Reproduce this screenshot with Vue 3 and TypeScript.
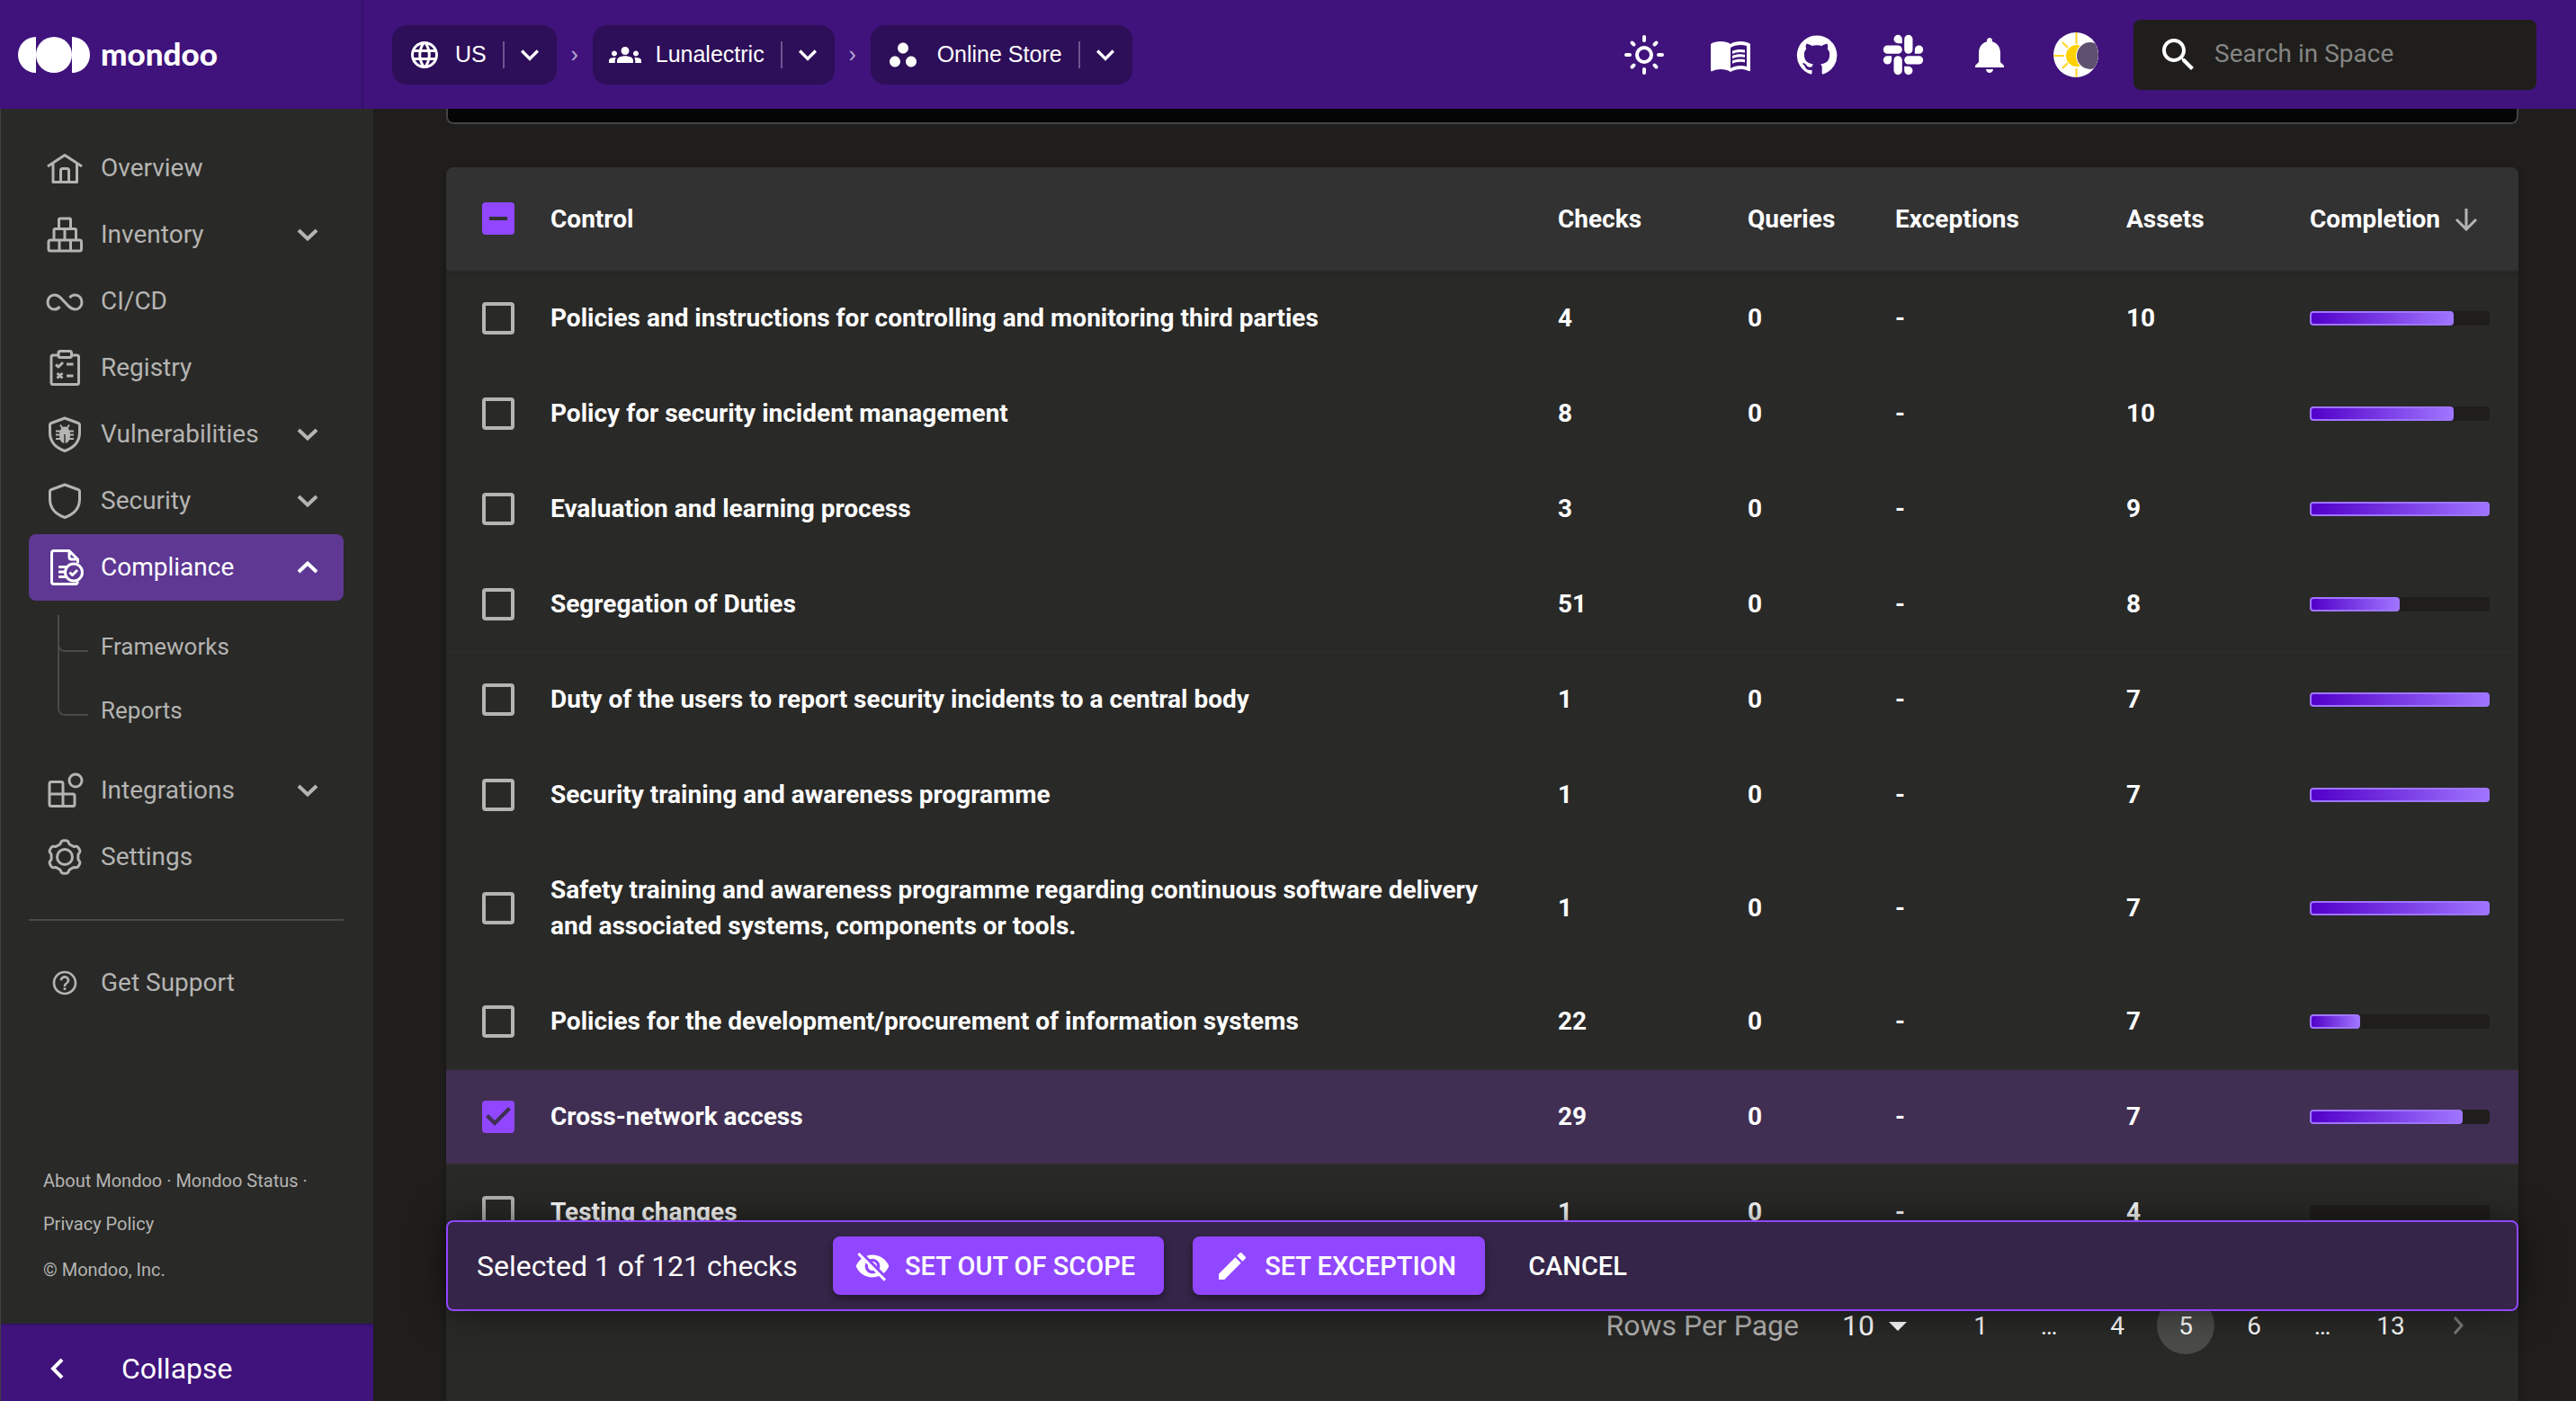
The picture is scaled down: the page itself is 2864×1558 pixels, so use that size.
<script setup lang="ts">
import { ref } from 'vue'

interface NavItem {
  label: string
  icon: string
  expandable?: boolean
  open?: boolean
  children?: string[]
}

interface Control {
  name: string
  checks: number
  queries: number
  exceptions: string
  assets: number
  completion: number
  selected?: boolean
}

interface Crumb {
  label: string
  icon: string
}

const crumbs: Crumb[] = [
  {
    label: 'US',
    icon: 'M11.99 2C6.47 2 2 6.48 2 12s4.47 10 9.99 10C17.52 22 22 17.52 22 12S17.52 2 11.99 2zm6.93 6h-2.95c-.32-1.25-.78-2.45-1.38-3.56 1.84.63 3.37 1.91 4.33 3.56zM12 4.04c.83 1.2 1.48 2.53 1.91 3.96h-3.82c.43-1.43 1.08-2.76 1.91-3.96zM4.26 14C4.1 13.36 4 12.69 4 12s.1-1.36.26-2h3.38c-.08.66-.14 1.32-.14 2s.06 1.34.14 2H4.26zm.82 2h2.95c.32 1.25.78 2.45 1.38 3.56-1.84-.63-3.37-1.9-4.33-3.56zm2.95-8H5.08c.96-1.66 2.49-2.93 4.33-3.56C8.81 5.55 8.35 6.75 8.03 8zM12 19.96c-.83-1.2-1.48-2.53-1.91-3.96h3.82c-.43 1.43-1.08 2.76-1.91 3.96zM14.34 14H9.66c-.09-.66-.16-1.32-.16-2s.07-1.35.16-2h4.68c.09.65.16 1.32.16 2s-.07 1.34-.16 2zm.25 5.56c.6-1.11 1.06-2.31 1.38-3.56h2.95c-.96 1.65-2.49 2.93-4.33 3.56zM16.36 14c.08-.66.14-1.32.14-2s-.06-1.34-.14-2h3.38c.16.64.26 1.31.26 2s-.1 1.36-.26 2h-3.38z',
  },
  {
    label: 'Lunalectric',
    icon: 'M12 12.75c1.63 0 3.07.39 4.24.9 1.08.48 1.76 1.56 1.76 2.73V18H6v-1.61c0-1.18.68-2.26 1.76-2.73 1.17-.52 2.61-.91 4.24-.91zM4 13c1.1 0 2-.9 2-2s-.9-2-2-2-2 .9-2 2 .9 2 2 2zm1.13 1.1c-.37-.06-.74-.1-1.13-.1-.99 0-1.93.21-2.78.58C.48 14.9 0 15.62 0 16.43V18h4.5v-1.61c0-.83.23-1.61.63-2.29zM20 13c1.1 0 2-.9 2-2s-.9-2-2-2-2 .9-2 2 .9 2 2 2zm4 3.43c0-.81-.48-1.53-1.22-1.85-.85-.37-1.79-.58-2.78-.58-.39 0-.76.04-1.13.1.4.68.63 1.46.63 2.29V18H24v-1.57zM12 6c1.66 0 3 1.34 3 3s-1.34 3-3 3-3-1.34-3-3 1.34-3 3-3z',
  },
  {
    label: 'Online Store',
    icon: 'M6 13c-2.2 0-4 1.8-4 4s1.8 4 4 4 4-1.8 4-4-1.8-4-4-4zm6-10C9.8 3 8 4.8 8 7s1.8 4 4 4 4-1.8 4-4-1.8-4-4-4zm6 10c-2.2 0-4 1.8-4 4s1.8 4 4 4 4-1.8 4-4-1.8-4-4-4z',
  },
]

// Six-lobed outline of the settings gear, in a 48-unit box.
function gearPath(): string {
  const points: string[] = []
  for (let i = 0; i < 120; i++) {
    const a = (i / 120) * Math.PI * 2
    const wave = Math.tanh(2.2 * -Math.cos(6 * a)) / Math.tanh(2.2)
    const r = 16.6 + 1.7 * wave
    points.push(`${(24 + r * Math.cos(a)).toFixed(2)} ${(24 + r * Math.sin(a)).toFixed(2)}`)
  }
  return `M${points.join('L')}Z`
}

const navItems: NavItem[] = [
  { label: 'Overview', icon: 'overview' },
  { label: 'Inventory', icon: 'inventory', expandable: true },
  { label: 'CI/CD', icon: 'cicd' },
  { label: 'Registry', icon: 'registry' },
  { label: 'Vulnerabilities', icon: 'vulnerabilities', expandable: true },
  { label: 'Security', icon: 'security', expandable: true },
  { label: 'Compliance', icon: 'compliance', expandable: true, open: true, children: ['Frameworks', 'Reports'] },
  { label: 'Integrations', icon: 'integrations', expandable: true },
  { label: 'Settings', icon: 'settings' },
]

const strokes: Record<string, string> = {
  overview: 'M5 22 24 9.500 43 22M11 18.500V39.500H37.500V18.500M19.500 39V26.500Q19.500 24.500 21.500 24.500H26.500Q28.500 24.500 28.500 26.500V39',
  inventory: 'M19 6H29.500Q30.500 6 30.500 7V17.500H17.500V7Q17.500 6 19 6ZM13.500 17.500H35Q36.500 17.500 36.500 19V30H12V19Q12 17.500 13.500 17.500ZM24 17.500V30M8 30H40.500Q42.500 30 42.500 32V40Q42.500 42 40.500 42H8Q6 42 6 40V32Q6 30 8 30ZM18 30V42M30.500 30V42',
  cicd: 'M18.500 30C17 32 15 33 12.500 33A7.500 8 0 0 1 12.500 17C17.500 17 20 20.500 24 25C28 29.500 30.500 33 35.500 33A7.500 8 0 0 0 35.500 17C33 17 31 18 29.500 20',
  registry: 'M17 10H11Q9 10 9 12V40.500Q9 42.500 11 42.500H37.500Q39.500 42.500 39.500 40.500V12Q39.500 10 37.500 10H32M19 5.500H29.500Q31.500 5.500 31.500 7.500V10.500Q31.500 12.500 29.500 12.500H19Q17 12.500 17 10.500V7.500Q17 5.500 19 5.500ZM14 20.500 17 23 22 18M26 20H33.500M15.500 30 21.500 35.500M21.500 30 15.500 35.500M26 33H33.500',
  vulnerabilities: 'M24 6 9 11.500Q7.500 12 7.500 13.500V22C7.500 32 14 39 24 42.500C34 39 40.500 32 40.500 22V13.500Q40.500 12 39 11.500Z',
  security: 'M24 6 9 11.500Q7.500 12 7.500 13.500V22C7.500 32 14 39 24 42.500C34 39 40.500 32 40.500 22V13.500Q40.500 12 39 11.500Z',
  compliance: 'M38.500 19V15L29 5.500H12Q9.500 5.500 9.500 8V40Q9.500 42.500 12 42.500H36Q38 42.500 38.500 39.500M29 5.500V12.500Q29 15 31.500 15H38.500M17 23.500H27M17 29H25M17 34.500H26M29.500 29.500 32.500 32.500 38 27M43.500 29.500A9.500 9.500 0 1 1 24.500 29.500A9.500 9.500 0 1 1 43.500 29.500Z',
  integrations: 'M9 14.500H20Q22 14.500 22 16.500V41.500H9Q7 41.500 7 39.500V16.500Q7 14.500 9 14.500ZM7 28H33Q35 28 35 30V39.500Q35 41.500 33 41.500H22M43 13A7 7 0 1 1 29 13A7 7 0 1 1 43 13Z',
  settings: gearPath() + 'M32.500 24A8.500 8.500 0 1 1 15.500 24A8.500 8.500 0 1 1 32.500 24Z',
}

const controls = ref<Control[]>([
  { name: 'Policies and instructions for controlling and monitoring third parties', checks: 4, queries: 0, exceptions: '-', assets: 10, completion: 80 },
  { name: 'Policy for security incident management', checks: 8, queries: 0, exceptions: '-', assets: 10, completion: 80 },
  { name: 'Evaluation and learning process', checks: 3, queries: 0, exceptions: '-', assets: 9, completion: 100 },
  { name: 'Segregation of Duties', checks: 51, queries: 0, exceptions: '-', assets: 8, completion: 50 },
  { name: 'Duty of the users to report security incidents to a central body', checks: 1, queries: 0, exceptions: '-', assets: 7, completion: 100 },
  { name: 'Security training and awareness programme', checks: 1, queries: 0, exceptions: '-', assets: 7, completion: 100 },
  { name: 'Safety training and awareness programme regarding continuous software delivery and associated systems, components or tools.', checks: 1, queries: 0, exceptions: '-', assets: 7, completion: 100 },
  { name: 'Policies for the development/procurement of information systems', checks: 22, queries: 0, exceptions: '-', assets: 7, completion: 28 },
  { name: 'Cross-network access', checks: 29, queries: 0, exceptions: '-', assets: 7, completion: 85, selected: true },
  { name: 'Testing changes', checks: 1, queries: 0, exceptions: '-', assets: 4, completion: 0 },
])

const pages: string[] = ['1', '…', '4', '5', '6', '…', '13']
const currentPage = ref('5')
const search = ref('')
const rowsPerPage = ref('10')
</script>

<template>
  <div class="app">
    <header class="topbar">
      <div class="brand">
        <a href="#" class="logo" aria-label="mondoo">
          <svg class="logo-mark" viewBox="0 0 80 40" aria-hidden="true">
            <path d="M20 0a20 20 0 0 0 0 40zM60 0a20 20 0 0 1 0 40z" />
            <circle cx="40" cy="20" r="20" />
          </svg>
          <span class="logo-text">mondoo</span>
        </a>
      </div>

      <nav class="crumbs" aria-label="Breadcrumb">
        <template v-for="(crumb, i) in crumbs" :key="crumb.label">
          <span v-if="i > 0" class="crumb-sep" aria-hidden="true">›</span>
          <div class="crumb" :class="{ current: i === crumbs.length - 1 }">
            <a href="#" class="crumb-link">
              <svg class="icon-36" viewBox="0 0 24 24" aria-hidden="true"><path :d="crumb.icon" /></svg>
              <span>{{ crumb.label }}</span>
            </a>
            <button type="button" class="crumb-toggle" :aria-label="`Switch ${crumb.label}`">
              <svg class="icon-40" viewBox="0 0 24 24" aria-hidden="true"><path d="M7.410 8.590 12 13.170l4.590-4.580L18 10l-6 6-6-6z" /></svg>
            </button>
          </div>
        </template>
      </nav>

      <div class="tools">
        <button type="button" aria-label="Theme">
          <svg class="icon-48" viewBox="0 0 48 48" aria-hidden="true">
            <circle cx="24" cy="24" r="8" fill="none" stroke="currentColor" stroke-width="4" />
            <path d="M24 4v4M24 40v4M4 24h4M40 24h4M10.500 10.500l2 2M35.500 35.500l2 2M37.500 10.500l-2 2M12.500 35.500l-2 2" fill="none" stroke="currentColor" stroke-width="4" stroke-linecap="round" />
          </svg>
        </button>
        <a href="#" aria-label="Documentation">
          <svg class="icon-48" viewBox="0 0 24 24" aria-hidden="true">
            <path d="M21 5c-1.110-.35-2.330-.5-3.500-.5-1.950 0-4.050.4-5.500 1.500-1.450-1.100-3.550-1.500-5.500-1.500S2.450 4.900 1 6v14.650c0 .25.25.5.5.5.1 0 .15-.05.25-.05C3.100 20.450 5.050 20 6.500 20c1.950 0 4.050.4 5.500 1.500 1.350-.85 3.800-1.500 5.500-1.500 1.650 0 3.350.3 4.750 1.050.1.05.15.05.25.05.25 0 .5-.25.5-.5V6c-.6-.45-1.250-.75-2-1zm0 13.500c-1.100-.35-2.300-.5-3.500-.5-1.700 0-4.150.65-5.500 1.500V8c1.350-.85 3.800-1.500 5.500-1.500 1.200 0 2.400.15 3.500.5v11.500z" />
            <path d="M17.500 10.500c.88 0 1.730.09 2.500.26V9.240c-.79-.15-1.640-.24-2.500-.24-1.700 0-3.240.29-4.500.83v1.660c1.130-.64 2.700-.99 4.500-.99zM13 12.490v1.660c1.130-.64 2.700-.99 4.500-.99.88 0 1.730.09 2.500.26V11.900c-.79-.15-1.640-.24-2.500-.24-1.700 0-3.240.3-4.500.83zm4.500 1.840c-1.700 0-3.240.29-4.500.83v1.660c1.130-.64 2.700-.99 4.500-.99.88 0 1.730.09 2.500.26v-1.520c-.79-.16-1.640-.24-2.500-.24z" />
          </svg>
        </a>
        <a href="#" aria-label="GitHub">
          <svg class="icon-48" viewBox="0 0 24 24" aria-hidden="true">
            <path d="M12 1.270a11 11 0 00-3.480 21.460c.55.09.73-.28.73-.55v-1.840c-3.030.64-3.670-1.460-3.670-1.460-.55-1.290-1.280-1.650-1.280-1.650-.92-.65.1-.65.1-.65 1.100 0 1.730 1.100 1.730 1.100.92 1.650 2.570 1.200 3.210.92a2 2 0 01.64-1.470c-2.470-.27-5.040-1.190-5.040-5.500 0-1.100.46-2.100 1.200-2.840a3.760 3.760 0 010-2.930s.91-.28 3.110 1.100c1.800-.49 3.700-.49 5.500 0 2.100-1.380 3.020-1.100 3.020-1.100a3.760 3.760 0 01.1 2.930c.83.74 1.200 1.740 1.200 2.940 0 4.210-2.570 5.130-5.040 5.400.45.37.82.92.82 2.020v3.030c0 .27.1.64.73.55A11 11 0 0012 1.270" />
          </svg>
        </a>
        <a href="#" aria-label="Slack">
          <svg class="icon-48" viewBox="-1 -1 26 26" aria-hidden="true">
            <path d="M5.042 15.165a2.528 2.528 0 0 1-2.520 2.523A2.528 2.528 0 0 1 0 15.165a2.527 2.527 0 0 1 2.522-2.520h2.520v2.520zm1.271 0a2.527 2.527 0 0 1 2.521-2.520 2.527 2.527 0 0 1 2.521 2.520v6.313A2.528 2.528 0 0 1 8.834 24a2.528 2.528 0 0 1-2.521-2.522v-6.313zM8.834 5.042a2.528 2.528 0 0 1-2.521-2.520A2.528 2.528 0 0 1 8.834 0a2.528 2.528 0 0 1 2.521 2.522v2.520H8.834zm0 1.271a2.528 2.528 0 0 1 2.521 2.521 2.528 2.528 0 0 1-2.521 2.521H2.522A2.528 2.528 0 0 1 0 8.834a2.528 2.528 0 0 1 2.522-2.521h6.312zm10.122 2.521a2.528 2.528 0 0 1 2.522-2.521A2.528 2.528 0 0 1 24 8.834a2.528 2.528 0 0 1-2.522 2.521h-2.522V8.834zm-1.268 0a2.528 2.528 0 0 1-2.523 2.521 2.527 2.527 0 0 1-2.520-2.521V2.522A2.527 2.527 0 0 1 15.165 0a2.528 2.528 0 0 1 2.523 2.522v6.312zm-2.523 10.122a2.528 2.528 0 0 1 2.523 2.522A2.528 2.528 0 0 1 15.165 24a2.527 2.527 0 0 1-2.520-2.522v-2.522h2.520zm0-1.268a2.527 2.527 0 0 1-2.520-2.523 2.526 2.526 0 0 1 2.520-2.520h6.313A2.527 2.527 0 0 1 24 15.165a2.528 2.528 0 0 1-2.522 2.523h-6.313z" />
          </svg>
        </a>
        <button type="button" aria-label="Notifications">
          <svg class="icon-48" viewBox="0 0 24 24" aria-hidden="true">
            <path d="M12 22c1.100 0 2-.9 2-2h-4c0 1.100.89 2 2 2zm6-6v-5c0-3.070-1.640-5.640-4.500-6.320V4c0-.83-.67-1.500-1.500-1.500s-1.500.67-1.500 1.500v.68C7.630 5.360 6 7.920 6 11v5l-2 2v1h16v-1l-2-2z" />
          </svg>
        </button>
        <button type="button" aria-label="Account">
          <svg class="avatar" viewBox="0 0 50 50" aria-hidden="true">
            <clipPath id="avatar-clip"><circle cx="25" cy="25" r="25" /></clipPath>
            <g clip-path="url(#avatar-clip)">
              <rect width="50" height="50" fill="#fff" />
              <path d="M25.500 0v13M25.500 40v10M0 26h12M10 11l6 6M16 34l-6 6" fill="none" stroke="#ffd51e" stroke-width="2" />
              <circle cx="26" cy="26" r="12" fill="#ffd100" />
              <circle cx="41" cy="26" r="16" fill="#fff" />
              <circle cx="41" cy="26" r="15" fill="#5f5070" />
            </g>
          </svg>
        </button>
      </div>

      <label class="search">
        <svg class="icon-48" viewBox="0 0 24 24" aria-hidden="true">
          <path d="M15.500 14h-.79l-.28-.27C15.410 12.590 16 11.110 16 9.500 16 5.910 13.090 3 9.500 3S3 5.910 3 9.500 5.910 16 9.500 16c1.610 0 3.090-.59 4.230-1.570l.27.28v.79l5 4.990L20.490 19l-4.990-5zm-6 0C7.010 14 5 11.990 5 9.500S7.010 5 9.500 5 14 7.010 14 9.500 11.990 14 9.500 14z" />
        </svg>
        <input v-model="search" type="text" placeholder="Search in Space" aria-label="Search in Space" />
      </label>
    </header>

    <div class="body">
      <aside class="sidebar">
        <nav class="nav" aria-label="Main">
          <template v-for="item in navItems" :key="item.label">
            <a href="#" class="nav-item" :class="{ active: item.open }">
              <svg class="nav-icon" viewBox="0 0 48 48" aria-hidden="true">
                <path :d="strokes[item.icon]" />
                <g v-if="item.icon === 'vulnerabilities'">
                  <path class="solid" d="M19.500 19Q19.500 15.500 24 15.500T28.500 19Q30 20 30 25Q30 33 24.700 34V24H23.300V34Q18 33 18 25Q18 20 19.500 19Z" />
                  <path class="fine" d="M19 13.500 21.500 17M29 13.500 26.500 17M14 20.500H34M14 24.500H19M29 24.500H34M14 29H19M29 29H34" />
                </g>
              </svg>
              <span class="nav-label">{{ item.label }}</span>
              <svg v-if="item.expandable" class="nav-chevron" viewBox="0 0 24 14" aria-hidden="true">
                <path :d="item.open ? 'M2 12 12 2.500 22 12' : 'M2 2 12 11.500 22 2'" />
              </svg>
            </a>
            <ul v-if="item.children" class="subnav">
              <li v-for="child in item.children" :key="child"><a href="#">{{ child }}</a></li>
            </ul>
          </template>
        </nav>
        <hr class="nav-rule" />
        <a href="#" class="nav-item support">
          <svg class="nav-icon" viewBox="-6 -6 36 36" aria-hidden="true">
            <path class="solid" d="M11 18h2v-2h-2v2zm1-16C6.480 2 2 6.480 2 12s4.480 10 10 10 10-4.480 10-10S17.520 2 12 2zm0 18c-4.410 0-8-3.590-8-8s3.590-8 8-8 8 3.590 8 8-3.590 8-8 8zm0-14c-2.210 0-4 1.790-4 4h2c0-1.100.9-2 2-2s2 .9 2 2c0 2-3 1.750-3 5h2c0-2.250 3-2.500 3-5 0-2.210-1.790-4-4-4z" />
          </svg>
          <span class="nav-label">Get Support</span>
        </a>
        <footer class="legal">
          <p><a href="#">About Mondoo</a> · <a href="#">Mondoo Status</a> · <a href="#">Privacy Policy</a></p>
          <p class="copyright">© Mondoo, Inc.</p>
        </footer>
        <button type="button" class="collapse">
          <svg viewBox="0 0 16 24" aria-hidden="true"><path d="M14 2 4 12 14 22" /></svg>
          <span>Collapse</span>
        </button>
      </aside>

      <main class="main">
        <div class="panel-end"></div>
        <section class="card">
          <table class="controls">
            <colgroup>
              <col class="c-select" /><col /><col class="c-checks" /><col class="c-queries" />
              <col class="c-exceptions" /><col class="c-assets" /><col class="c-completion" />
            </colgroup>
            <thead>
              <tr>
                <th class="select-cell"><input type="checkbox" class="box" :indeterminate="true" aria-label="Select all controls" /></th>
                <th>Control</th>
                <th>Checks</th>
                <th>Queries</th>
                <th>Exceptions</th>
                <th>Assets</th>
                <th aria-sort="descending">
                  <span class="sorted">Completion
                    <svg viewBox="0 0 26 26" aria-hidden="true"><path d="M13 1V24M2 13 13 24 24 13" /></svg>
                  </span>
                </th>
              </tr>
            </thead>
            <tbody>
              <tr v-for="row in controls" :key="row.name" :class="{ selected: row.selected }">
                <td class="select-cell"><input v-model="row.selected" type="checkbox" class="box" :aria-label="row.name" /></td>
                <td>{{ row.name }}</td>
                <td>{{ row.checks }}</td>
                <td>{{ row.queries }}</td>
                <td>{{ row.exceptions }}</td>
                <td>{{ row.assets }}</td>
                <td>
                  <div class="track"><div v-if="row.completion" class="fill" :style="{ width: row.completion + '%' }"></div></div>
                </td>
              </tr>
            </tbody>
          </table>

          <div class="pager">
            <label class="rows-label" for="rows">Rows Per Page</label>
            <div class="rows-select">
              <select id="rows" v-model="rowsPerPage">
                <option>10</option>
                <option>25</option>
                <option>50</option>
              </select>
              <svg viewBox="0 0 20 10" aria-hidden="true"><path d="M0 0h20L10 10z" /></svg>
            </div>
            <nav class="pages" aria-label="Pagination">
              <template v-for="(page, i) in pages" :key="i">
                <span v-if="page === '…'" class="page">{{ page }}</span>
                <button v-else type="button" class="page" :class="{ current: page === currentPage }" @click="currentPage = page">{{ page }}</button>
              </template>
              <button type="button" class="page next" aria-label="Next page">
                <svg viewBox="0 0 12 20" aria-hidden="true"><path d="M2 1 10 10 2 19" /></svg>
              </button>
            </nav>
          </div>
        </section>

        <div class="actions">
          <span class="actions-text">Selected 1 of 121 checks</span>
          <button type="button" class="btn primary">
            <svg class="icon-40" viewBox="0 0 24 24" aria-hidden="true"><path d="M12 7c2.760 0 5 2.240 5 5 0 .65-.13 1.260-.36 1.830l2.920 2.920c1.510-1.260 2.700-2.890 3.430-4.750-1.730-4.390-6-7.500-11-7.500-1.400 0-2.740.25-3.980.7l2.160 2.160C10.740 7.130 11.350 7 12 7zM2 4.270l2.280 2.280.46.46C3.080 8.300 1.780 10.020 1 12c1.730 4.390 6 7.500 11 7.500 1.550 0 3.030-.3 4.380-.84l.42.42L19.730 22 21 20.730 3.270 3 2 4.270zM7.530 9.800l1.550 1.550c-.05.21-.08.43-.08.65 0 1.660 1.340 3 3 3 .22 0 .44-.03.65-.08l1.550 1.550c-.67.33-1.410.53-2.200.53-2.760 0-5-2.240-5-5 0-.79.2-1.530.53-2.200zm4.310-.78l3.150 3.150.02-.16c0-1.660-1.340-3-3-3l-.17.01z" /></svg>
            <span>SET OUT OF SCOPE</span>
          </button>
          <button type="button" class="btn primary">
            <svg class="icon-40" viewBox="0 0 24 24" aria-hidden="true"><path d="M3 17.250V21h3.750L17.810 9.940l-3.750-3.750L3 17.250zM20.710 7.040c.39-.39.39-1.020 0-1.410l-2.340-2.340c-.39-.39-1.020-.39-1.410 0l-1.830 1.830 3.750 3.750 1.830-1.830z" /></svg>
            <span>SET EXCEPTION</span>
          </button>
          <button type="button" class="btn">CANCEL</button>
        </div>
      </main>
    </div>
  </div>
</template>

<style>
body {
  margin: 0;
  background: #1f1e1c;
}
</style>

<style scoped>
.app,
.app * {
  box-sizing: border-box;
}

.app {
  display: flex;
  flex-direction: column;
  height: 100vh;
  overflow: hidden;
  background: #1f1e1c;
  color: #fff;
  font-family: Roboto, "Liberation Sans", sans-serif;
  font-size: 28px;
}

a {
  color: inherit;
  text-decoration: none;
}

button {
  padding: 0;
  border: 0;
  background: none;
  color: inherit;
  font: inherit;
  cursor: pointer;
}

svg {
  display: block;
  flex: none;
  fill: currentColor;
}

.icon-36 { width: 36px; height: 36px; }
.icon-40 { width: 40px; height: 40px; }
.icon-48 { width: 48px; height: 48px; }

/* Top bar */
.topbar {
  display: flex;
  flex: none;
  align-items: center;
  height: 121px;
  padding-right: 44px;
  background: #3f137b;
}

.brand {
  display: flex;
  align-items: center;
  width: 404px;
  height: 100%;
  padding-left: 20px;
  border-right: 2px solid #32106a;
}

.logo {
  display: flex;
  align-items: center;
  gap: 12px;
}

.logo-mark { width: 80px; height: 40px; }

.logo-text {
  padding-bottom: 4px;
  font-family: Lato, sans-serif;
  font-size: 35px;
  font-weight: 900;
  line-height: 40px;
}

.crumbs {
  display: flex;
  align-items: center;
  margin-left: 32px;
  font-family: "Liberation Sans", Arial, sans-serif;
  font-size: 25px;
}

.crumb {
  display: flex;
  align-items: center;
  height: 66px;
  padding: 0 10px 0 18px;
  border-radius: 16px;
  background: #2d0e58;
}

.crumb-link {
  display: flex;
  align-items: center;
  gap: 16px;
  padding-right: 18px;
}

.crumb.current .crumb-link { gap: 20px; }

.crumb-toggle {
  display: flex;
  padding-left: 8px;
  height: 30px;
  align-items: center;
  border-left: 2px solid #6f5590;
}

.crumb-sep {
  width: 40px;
  color: #b9a8d0;
  text-align: center;
}

.tools {
  display: flex;
  gap: 48px;
  align-items: center;
  margin-left: auto;
}

.tools > * {
  display: flex;
  justify-content: center;
  width: 48px;
}

.avatar { width: 50px; height: 50px; }

.search {
  display: flex;
  align-items: center;
  gap: 16px;
  width: 448px;
  height: 78px;
  margin-left: 40px;
  padding: 0 26px;
  border-radius: 8px;
  background: #1f1e1c;
}

.search input {
  flex: 1;
  min-width: 0;
  padding: 0 0 2px;
  border: 0;
  outline: 0;
  background: none;
  color: #fff;
  font: inherit;
}

.search input::placeholder {
  color: #858583;
  opacity: 1;
}

/* Sidebar */
.body {
  display: flex;
  flex: 1;
  min-height: 0;
}

.sidebar {
  display: flex;
  flex: none;
  flex-direction: column;
  width: 415px;
  border-left: 1px solid #40403e;
  background: #292927;
  color: #b4b4b2;
}

.nav { padding: 29px 33px 0 31px; }

.nav-item {
  display: flex;
  align-items: center;
  height: 74px;
  padding: 0 28px 0 16px;
  border-radius: 8px;
}

.nav-item.active {
  background: #5e3893;
  color: #fff;
}

.nav-icon {
  width: 48px;
  height: 48px;
  fill: none;
  stroke: currentColor;
  stroke-width: 3;
  stroke-linejoin: round;
}

.nav-icon .solid {
  fill: currentColor;
  stroke: none;
}

.nav-icon .fine { stroke-width: 2; }

.nav-label {
  flex: 1;
  margin-left: 16px;
  padding-bottom: 2px;
}

.nav-chevron {
  width: 24px;
  height: 14px;
  fill: none;
  stroke: currentColor;
  stroke-width: 4;
}

.subnav {
  margin: 16px 0;
  padding: 0;
  list-style: none;
  font-size: 26px;
}

.subnav li {
  position: relative;
  padding-left: 80px;
  line-height: 71px;
}

.subnav li::before {
  position: absolute;
  top: 0;
  left: 32px;
  width: 32px;
  height: 39px;
  border-bottom: 2px solid #4a4a48;
  border-left: 2px solid #4a4a48;
  border-bottom-left-radius: 8px;
  content: "";
}

.subnav li:not(:last-child)::after {
  position: absolute;
  top: 0;
  bottom: 0;
  left: 32px;
  border-left: 2px solid #4a4a48;
  content: "";
}

.nav-rule {
  width: auto;
  height: 2px;
  margin: 32px 33px 32px 31px;
  border: 0;
  background: #4a4a48;
}

.support { margin: 0 33px 0 31px; }

.legal {
  margin-top: auto;
  padding: 0 48px 36px 47px;
  font-size: 20px;
  line-height: 48px;
}

.legal p { margin: 0; }

.legal .copyright { margin-top: 3px; }

.collapse {
  display: flex;
  align-items: center;
  gap: 64px;
  height: 86px;
  padding: 12px 0 0 54px;
  border-top: 2px solid #32106a;
  background: #3f137b;
  color: #fff;
  font-size: 32px;
}

.collapse svg {
  width: 16px;
  height: 24px;
  fill: none;
  stroke: currentColor;
  stroke-width: 4;
}

/* Main column */
.main {
  position: relative;
  display: flex;
  flex: 1;
  flex-direction: column;
  min-width: 0;
  padding: 0 64px 0 81px;
}

.panel-end {
  flex: none;
  height: 17px;
  margin-bottom: 48px;
  border: 2px solid #434345;
  border-top: 0;
  border-radius: 0 0 8px 8px;
  background: #050505;
}

.card {
  flex: 1;
  min-height: 0;
  overflow: hidden;
  border-radius: 8px 8px 0 0;
  background: #292927;
  box-shadow: 0 2px 6px rgba(0, 0, 0, 0.3);
}

.controls {
  width: 100%;
  table-layout: fixed;
  border-spacing: 0;
  font-weight: 700;
  line-height: 40px;
}

.c-select { width: 84px; }
.c-checks { width: 211px; }
.c-queries { width: 164px; }
.c-exceptions { width: 257px; }
.c-assets { width: 204px; }
.c-completion { width: 264px; }

.controls th,
.controls td {
  padding: 32px;
  border-bottom: 2px solid #2b2b29;
  text-align: left;
  vertical-align: middle;
}

.controls th {
  height: 116px;
  padding: 2px 32px 0;
  background: #323232;
  font-weight: 700;
}

.controls .select-cell { padding: 0 0 0 40px; }

.controls tbody tr:first-child td { background: linear-gradient(#252523, #292927 8px); }

.controls .selected td { background: #402f52; }

.box {
  display: block;
  width: 36px;
  height: 36px;
  margin: 0;
  border: 4px solid #b4b4b2;
  border-radius: 4px;
  appearance: none;
}

.box:checked,
.box:indeterminate {
  border: 0;
  background: #9147ff;
}

.box::before {
  display: none;
  width: 36px;
  height: 36px;
  content: "";
}

.box:checked::before {
  display: block;
  background: #402f52;
  clip-path: polygon(4px 18px, 7px 15px, 14px 22px, 29px 7px, 32px 10px, 14px 28px);
}

.box:indeterminate::before {
  display: block;
  background: #323232;
  clip-path: inset(16px 8px);
}

.sorted {
  display: flex;
  align-items: center;
  gap: 16px;
}

.sorted svg {
  width: 26px;
  height: 26px;
  fill: none;
  stroke: #b4b4b2;
  stroke-width: 3;
}

.track {
  height: 16px;
  border-radius: 4px;
  background: #1f1e1c;
}

.fill {
  height: 16px;
  border: 2px solid #9f75ff;
  border-radius: 4px;
  background: linear-gradient(90deg, #5200c9, #9f75ff);
}

.pager {
  display: flex;
  align-items: center;
  justify-content: flex-end;
  height: 64px;
  margin-top: 40px;
  padding-right: 36px;
  font-size: 32px;
}

.rows-label { color: #b4b4b2; }

.rows-select {
  position: relative;
  margin: 0 50px 0 48px;
}

.rows-select select {
  display: block;
  width: 72px;
  padding: 0;
  border: 0;
  outline: 0;
  background: none;
  color: #fff;
  font: inherit;
  appearance: none;
}

.rows-select svg {
  position: absolute;
  top: 50%;
  right: 0;
  width: 20px;
  height: 10px;
  margin-top: -4px;
  pointer-events: none;
}

.pages {
  display: flex;
  gap: 12px;
  font-size: 28px;
}

.page {
  display: flex;
  align-items: center;
  justify-content: center;
  width: 64px;
  height: 64px;
  border-radius: 50%;
}

.page.current { background: #4b4b49; }

.page.next {
  width: 62px;
  color: #7b7b79;
}

.next svg {
  width: 12px;
  height: 20px;
  fill: none;
  stroke: currentColor;
  stroke-width: 3;
}

/* Bulk action bar, floating over the table */
.actions {
  position: absolute;
  right: 64px;
  bottom: 100px;
  left: 81px;
  display: flex;
  align-items: center;
  height: 101px;
  padding-left: 32px;
  border: 2px solid #9147ff;
  border-radius: 8px;
  background: #352548;
  box-shadow: 0 0 40px rgba(0, 0, 0, 0.5);
}

.actions-text {
  min-width: 364px;
  margin-right: 32px;
  font-size: 32px;
}

.btn {
  display: flex;
  align-items: center;
  gap: 16px;
  height: 65px;
  margin-right: 32px;
  padding: 0 16px;
  border-radius: 8px;
  font-size: 29px;
  font-weight: 500;
}

.btn.primary {
  padding: 0 32px 0 24px;
  background: #9147ff;
  box-shadow: 0 4px 8px rgba(0, 0, 0, 0.4);
}
</style>
